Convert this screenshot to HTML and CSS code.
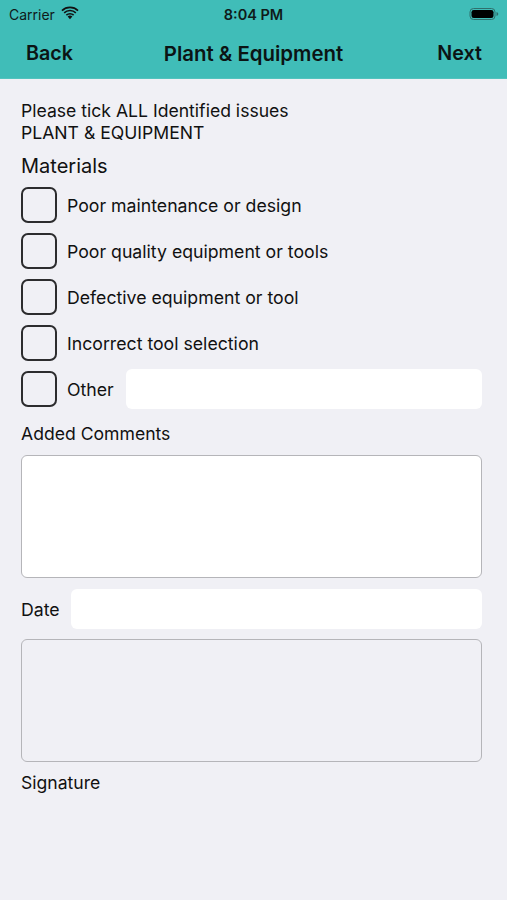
FILE: index.html
```html
<!DOCTYPE html>
<html>
<head>
<meta charset="utf-8">
<link rel="stylesheet" href="styles.css">
</head>
<body>
<header class="topbar">
  <div class="status">
    <div class="status-left">
      <span class="carrier">Carrier</span>
      <svg class="wifi" width="18" height="14" viewBox="0 0 18 14">
        <path d="M9 13.2 L6.6 10.6 A3.4 3.4 0 0 1 11.4 10.6 Z" fill="#111"/>
        <path d="M4.8 8.6 A6 6 0 0 1 13.2 8.6 L12.1 9.8 A4.4 4.4 0 0 0 5.9 9.8 Z" fill="#111"/>
        <path d="M2.6 6.3 A9.2 9.2 0 0 1 15.4 6.3 L14.3 7.5 A7.6 7.6 0 0 0 3.7 7.5 Z" fill="#111"/>
        <path d="M0.4 4 A12.4 12.4 0 0 1 17.6 4 L16.5 5.2 A10.8 10.8 0 0 0 1.5 5.2 Z" fill="#111"/>
      </svg>
    </div>
    <span class="time">8:04 PM</span>
    <div class="status-right">
      <svg class="battery" width="30" height="14" viewBox="0 0 30 14">
        <rect x="1" y="1.5" width="25" height="11" rx="3.5" fill="none" stroke="#2f6f6c" stroke-width="1"/>
        <rect x="2.5" y="3" width="22" height="8" rx="2.2" fill="#000"/>
        <path d="M27.5 5 Q29.3 5.5 29.3 7 Q29.3 8.5 27.5 9 Z" fill="#2f6f6c"/>
      </svg>
    </div>
  </div>
  <nav class="navbar">
    <span class="nav-btn">Back</span>
    <span class="nav-title">Plant &amp; Equipment</span>
    <span class="nav-btn">Next</span>
  </nav>
</header>
<main class="content">
  <p class="intro">Please tick ALL Identified issues<br>PLANT &amp; EQUIPMENT</p>
  <h2 class="section">Materials</h2>
  <ul class="checks">
    <li class="check-row"><span class="box"></span><span class="label">Poor maintenance or design</span></li>
    <li class="check-row"><span class="box"></span><span class="label">Poor quality equipment or tools</span></li>
    <li class="check-row"><span class="box"></span><span class="label">Defective equipment or tool</span></li>
    <li class="check-row"><span class="box"></span><span class="label">Incorrect tool selection</span></li>
    <li class="check-row"><span class="box"></span><span class="label">Other</span><span class="field other-field"></span></li>
  </ul>
  <div class="comments-label">Added Comments</div>
  <div class="textarea"></div>
  <div class="date-row"><span class="label">Date</span><span class="field date-field"></span></div>
  <div class="sigpad"></div>
  <div class="sig-label">Signature</div>
</main>
</body>
</html>
```
FILE: styles.css
```css
* { box-sizing: border-box; }
html, body { margin: 0; padding: 0; }
body {
  width: 507px;
  height: 900px;
  background: #f0f0f5;
  font-family: Inter, "Liberation Sans", Arial, sans-serif;
  color: #111;
  overflow: hidden;
}
.topbar {
  background: #40bdb8;
  height: 79px;
  border-bottom: 1px solid #52c3be;
}
.status {
  height: 28px;
  display: flex;
  align-items: center;
  justify-content: space-between;
  padding: 0 8px 0 9px;
  position: relative;
}
.status-left { display: flex; align-items: center; gap: 6px; }
.carrier { font-size: 14px; color: #0f1a1a; }
.wifi { margin-top: -2px; }
.time {
  position: absolute;
  left: 0; right: 0;
  text-align: center;
  font-size: 14.5px;
  font-weight: 600;
  color: #0f1a1a;
}
.status-right { display: flex; align-items: center; }
.navbar {
  height: 50px;
  display: flex;
  align-items: center;
  justify-content: space-between;
  padding: 0 25px 0 26px;
  position: relative;
}
.nav-btn, .nav-title {
  font-size: 19.7px;
  font-weight: 600;
  color: #0b1414;
}
.nav-title {
  position: absolute;
  left: 0; right: 0;
  text-align: center;
  font-size: 20.4px;
  pointer-events: none;
}
.content {
  padding: 21px 25px 0 21px;
}
.intro {
  margin: 0;
  font-size: 17.6px;
  line-height: 22px;
}
.section {
  margin: 10px 0 0;
  font-size: 20px;
  font-weight: 400;
  line-height: 24px;
}
.checks {
  list-style: none;
  margin: 9px 0 0;
  padding: 0;
  display: flex;
  flex-direction: column;
  gap: 10px;
}
.check-row {
  display: flex;
  align-items: center;
  height: 36px;
}
.box {
  flex: none;
  width: 36px;
  height: 36px;
  border: 2px solid #2c2c2e;
  border-radius: 7px;
  margin-right: 10px;
}
.label {
  font-size: 17.7px;
}
.field {
  display: block;
  background: #fff;
  border-radius: 6px;
  height: 40px;
  flex: 1;
}
.other-field { margin-left: 12px; }
.comments-label {
  margin-top: 16px;
  font-size: 17.6px;
  line-height: 22px;
}
.textarea {
  margin-top: 10px;
  height: 123px;
  background: #fff;
  border: 1.5px solid #b5b5b9;
  border-radius: 6px;
}
.date-row {
  display: flex;
  align-items: center;
  margin-top: 11px;
  height: 40px;
}
.date-field { margin-left: 11px; }
.sigpad {
  margin-top: 10px;
  height: 123px;
  border: 1.5px solid #b5b5b9;
  border-radius: 6px;
}
.sig-label {
  margin-top: 10px;
  font-size: 17.6px;
  line-height: 22px;
}
```
